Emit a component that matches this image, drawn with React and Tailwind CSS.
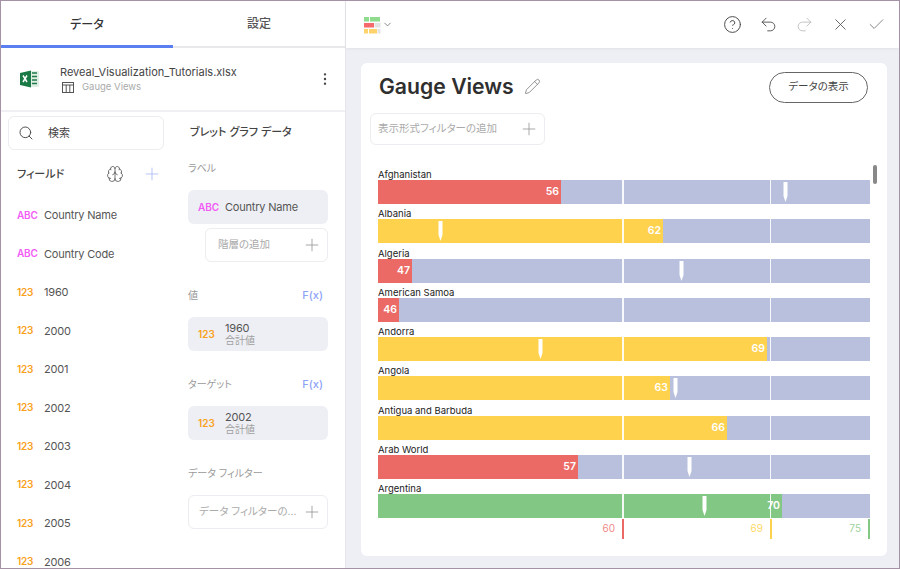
import { Brain, Check, ChevronDown, CircleHelp, MoreVertical, Pencil, Plus, Redo2, Search, Undo2, X } from "lucide-react";

const FONT = "font-['Inter','Noto_Sans_CJK_JP',sans-serif] [font-feature-settings:'palt']";

const FIELDS = [
  { type: "ABC", name: "Country Name" },
  { type: "ABC", name: "Country Code" },
  { type: "123", name: "1960" },
  { type: "123", name: "2000" },
  { type: "123", name: "2001" },
  { type: "123", name: "2002" },
  { type: "123", name: "2003" },
  { type: "123", name: "2004" },
  { type: "123", name: "2005" },
  { type: "123", name: "2006" },
];

// fill and marker are px from the left edge of the bar
const ROWS = [
  { name: "Afghanistan", value: 56, fill: 183, color: "bg-[#ec6a66]", marker: 405 },
  { name: "Albania", value: 62, fill: 285, color: "bg-[#ffd24d]", marker: 60 },
  { name: "Algeria", value: 47, fill: 34, color: "bg-[#ec6a66]", marker: 301 },
  { name: "American Samoa", value: 46, fill: 21, color: "bg-[#ec6a66]" },
  { name: "Andorra", value: 69, fill: 389, color: "bg-[#ffd24d]", marker: 160 },
  { name: "Angola", value: 63, fill: 292, color: "bg-[#ffd24d]", marker: 295 },
  { name: "Antigua and Barbuda", value: 66, fill: 349, color: "bg-[#ffd24d]" },
  { name: "Arab World", value: 57, fill: 200, color: "bg-[#ec6a66]", marker: 309 },
  { name: "Argentina", value: 70, fill: 404, color: "bg-[#83c784]", marker: 324 },
];

const TypeTag = ({ type }) => (
  <span className={`w-[17px] text-[10px] font-semibold ${type === "ABC" ? "text-[#f25cf5]" : "text-[#f9a11b]"}`}>
    {type}
  </span>
);

const SectionHead = ({ label, fx }) => (
  <div className="flex h-4 w-[140px] items-center justify-between pr-[5px] text-[10px] text-[#9a9a9a]">
    <span>{label}</span>
    {fx && <span className="text-[11px] font-medium text-[#8fa3f5]">F(x)</span>}
  </div>
);

const Chip = ({ type, title, sub }) => (
  <div className="flex h-[34px] w-[140px] items-center gap-[10px] rounded-md bg-[#eeeff4] pl-[10px] text-[#555]">
    <TypeTag type={type} />
    <div className="flex flex-col leading-[12px]">
      <span className="text-[11px] tracking-[-0.2px]">{title}</span>
      {sub && <span className="text-[10px] text-[#a0a0a0]">{sub}</span>}
    </div>
  </div>
);

const AddBox = ({ label, className }) => (
  <div className={`flex items-center justify-between rounded-md border border-[#ececf1] pr-[5px] text-[10.5px] text-[#aaa] ${className}`}>
    <span className="truncate">{label}</span>
    <Plus className="h-[20px] w-[20px] shrink-0 text-[#999]" strokeWidth={1} />
  </div>
);

const ExcelIcon = () => (
  <svg width="20" height="18" viewBox="0 0 20 18">
    <path d="M7 1h11a1 1 0 0 1 1 1v14a1 1 0 0 1-1 1H7z" fill="#dfeee5" />
    <path d="M12 3h5M12 6.500h5M12 10h5M12 13.500h5" stroke="#1f7a48" strokeWidth="1.6" />
    <path d="M0 3l11-2.500v17L0 15z" fill="#1a7a45" />
    <path d="M3 5.500l4 6.500M7 5.500l-4 6.500" stroke="#fff" strokeWidth="1.5" />
  </svg>
);

const SheetIcon = () => (
  <svg width="12" height="11" viewBox="0 0 12 11" fill="none" stroke="#555" strokeWidth="1">
    <rect x="0.500" y="0.500" width="11" height="10" />
    <path d="M0.500 3h11M4.200 3v7.500M7.800 3v7.500" />
  </svg>
);

const ChartIcon = () => (
  <svg width="18" height="18" viewBox="0 0 18 18">
    <rect x="0" y="1" width="5" height="4.500" fill="#8fdc8f" />
    <rect x="6" y="1" width="10" height="4.500" fill="#8fdc8f" />
    <rect x="0" y="7" width="10" height="4.500" fill="#f56a6a" />
    <rect x="10.500" y="7" width="6" height="4.500" fill="#e3e3e3" />
    <rect x="0" y="13" width="4" height="4.500" fill="#ffd36b" />
    <rect x="5" y="13" width="8" height="4.500" fill="#ffd36b" />
    <rect x="13.500" y="13" width="3" height="4.500" fill="#e3e3e3" />
  </svg>
);

const Marker = ({ left }) => (
  <svg className="absolute top-[2px]" style={{ left }} width="5" height="20" viewBox="0 0 5 20">
    <path d="M0.500 0h4v14L2.500 20 0.500 14z" fill="#fff" />
  </svg>
);

const Bar = ({ name, value, fill, color, marker }) => (
  <div className="flex h-[39.25px] shrink-0 flex-col">
    <span className="h-[11px] text-[9.5px] leading-[11px] text-[#222]">{name}</span>
    <div className="relative h-[24px] w-[492px] shrink-0 bg-[#b8c0dd]">
      <div
        className={`flex h-full items-center justify-end pr-[2px] text-[10.5px] font-semibold text-white ${color}`}
        style={{ width: fill }}
      >
        {value}
      </div>
      <div className="absolute inset-y-0 left-[244px] w-[2px] bg-white/90" />
      <div className="absolute inset-y-0 left-[392px] w-[1px] bg-white/90" />
      {marker !== undefined && <Marker left={marker} />}
    </div>
  </div>
);

const Threshold = ({ value, width, text, tick }) => (
  <div className={`flex h-[20px] items-center justify-end border-r-2 pb-[1px] pr-[7px] text-[10px] ${text} ${tick}`} style={{ width }}>
    {value}
  </div>
);

export default function App() {
  return (
    <div className={`${FONT} flex h-[569px] w-[900px] overflow-hidden border border-[#a593a5] bg-white`}>
      <aside className="flex w-[345px] shrink-0 flex-col border-r border-[#e6e6ea]">
        <div className="flex h-[47px] shrink-0 border-b-2 border-[#e9e9ec] text-[12px] font-medium">
          <div className="-mb-[2px] flex w-[172px] items-center justify-center border-b-[3px] border-[#5b7ff0] pt-[3px] text-[#333]">データ</div>
          <div className="flex w-[172px] items-center justify-center pt-[1px] text-[#555]">設定</div>
        </div>
        <div className="flex h-[64px] shrink-0 items-center border-b-2 border-[#f0f0f4] pl-[19px] pr-[12px]">
          <ExcelIcon />
          <div className="ml-[20px] flex flex-1 flex-col gap-[2px]">
            <span className="text-[11px] leading-[14px] text-[#444]">Reveal_Visualization_Tutorials.xlsx</span>
            <span className="flex items-center gap-[8px] pl-[2px] text-[9.5px] leading-[12px] text-[#aaa]">
              <SheetIcon />
              Gauge Views
            </span>
          </div>
          <MoreVertical className="h-[16px] w-[16px] text-[#444]" strokeWidth={1.6} />
        </div>
        <div className="flex min-h-0 flex-1">
          <div className="w-[173px] shrink-0 pl-[7px] pt-[4px]">
            <div className="flex h-[34px] w-[156px] items-center gap-[14px] rounded-md border border-[#ececf1] pl-[9px] text-[11px] text-[#444]">
              <Search className="h-[16px] w-[16px] text-[#444]" strokeWidth={1.4} />
              検索
            </div>
            <div className="flex h-[46px] items-center pl-[9px] pr-[12px] pt-[2px] text-[11px] font-medium text-[#444]">
              <span className="flex-1">フィールド</span>
              <Brain className="mr-[18px] h-[18px] w-[18px] text-[#555]" strokeWidth={1.1} />
              <Plus className="h-[20px] w-[20px] text-[#a9b8f7]" strokeWidth={1} />
            </div>
            <div className="flex flex-col">
              {FIELDS.map((f) => (
                <div key={f.name} className="flex h-[38.5px] shrink-0 items-center gap-[10px] pl-[9px] text-[11px] tracking-[-0.2px] text-[#555]">
                  <TypeTag type={f.type} />
                  {f.name}
                </div>
              ))}
            </div>
          </div>
          <div className="flex-1 pl-[14px] pt-[12px]">
            <div className="pl-[2px] text-[11px] font-medium leading-[16px] text-[#444]">ブレット グラフ データ</div>
            <div className="mt-[20px]"><SectionHead label="ラベル" /></div>
            <div className="mt-[14px]"><Chip type="ABC" title="Country Name" /></div>
            <AddBox label="階層の追加" className="ml-[17px] mt-[4px] h-[34px] w-[123px] pl-[12px]" />
            <div className="mt-[25px]"><SectionHead label="値" fx /></div>
            <div className="mt-[14px]"><Chip type="123" title="1960" sub="合計値" /></div>
            <div className="mt-[25px]"><SectionHead label="ターゲット" fx /></div>
            <div className="mt-[14px]"><Chip type="123" title="2002" sub="合計値" /></div>
            <div className="mt-[25px]"><SectionHead label="データ フィルター" /></div>
            <AddBox label="データ フィルターの追加" className="mt-[14px] h-[34px] w-[140px] pl-[10px]" />
          </div>
        </div>
      </aside>
      <main className="flex min-w-0 flex-1 flex-col bg-[#eeeff5]">
        <div className="flex h-[47px] shrink-0 items-center bg-white pl-[18px] pr-[13px] shadow-[0_1px_3px_rgba(0,0,0,0.06)]">
          <ChartIcon />
          <ChevronDown className="h-[11px] w-[11px] text-[#555]" strokeWidth={1.5} />
          <div className="ml-auto flex items-center gap-[17px]">
            <CircleHelp className="h-[19px] w-[19px] text-[#444]" strokeWidth={1.2} />
            <Undo2 className="h-[19px] w-[19px] text-[#444]" strokeWidth={1.1} />
            <Redo2 className="h-[19px] w-[19px] text-[#bbb]" strokeWidth={1.1} />
            <X className="h-[19px] w-[19px] text-[#555]" strokeWidth={1.1} />
            <Check className="h-[19px] w-[19px] text-[#777]" strokeWidth={1.1} />
          </div>
        </div>
        <div className="relative mb-[12px] ml-[15px] mr-[12px] mt-[15px] flex min-h-0 flex-1 flex-col rounded-md bg-white pl-[17px]">
          <div className="flex h-[50px] shrink-0 items-center justify-between pb-[2px] pr-[19px]">
            <div className="flex items-center gap-[10px] pl-[1px]">
              <span className="text-[21.2px] font-semibold text-[#2f2f2f]">Gauge Views</span>
              <Pencil className="h-[17px] w-[17px] text-[#777]" strokeWidth={1.1} />
            </div>
            <div className="flex h-[31px] w-[99px] items-center justify-center rounded-full border border-[#666] text-[10.5px] text-[#444]">データの表示</div>
          </div>
          <AddBox label="表示形式フィルターの追加" className="-ml-[8px] h-[32px] w-[175px] shrink-0 pl-[7px]" />
          <div className="mt-[24px] flex min-h-0 flex-1 flex-col overflow-hidden">
            {ROWS.map((r) => (
              <Bar key={r.name} {...r} />
            ))}
          </div>
          <div className="mb-[17px] flex h-[20px] shrink-0">
            <Threshold value="60" width={246} text="text-[#ef8a87]" tick="border-[#ec6a66]" />
            <Threshold value="69" width={148} text="text-[#ffd966]" tick="border-[#ffd24d]" />
            <Threshold value="75" width={98} text="text-[#9dd29e]" tick="border-[#83c784]" />
          </div>
          <div className="absolute left-[512px] top-[102px] h-[19px] w-[4px] rounded-full bg-[#888]" />
        </div>
      </main>
    </div>
  );
}
